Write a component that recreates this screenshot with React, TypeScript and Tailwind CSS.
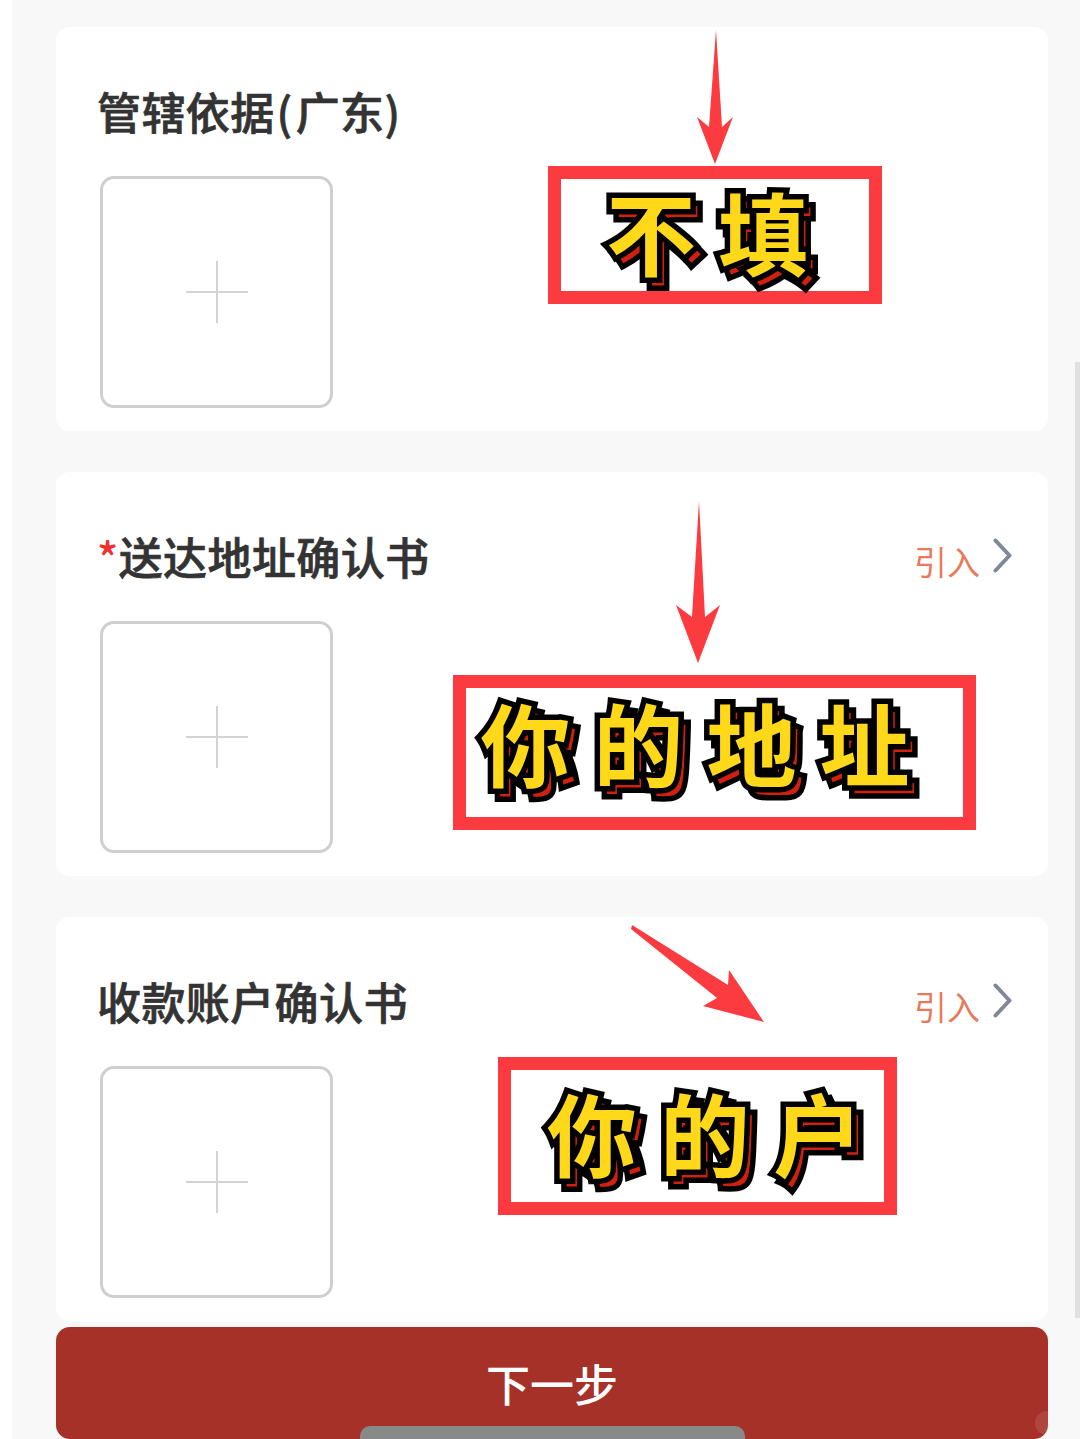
import type { ReactNode } from "react";

const FONT = "font-['Noto_Sans_CJK_SC','Noto_Sans',sans-serif]";

function Chevron() {
  return (
    <svg width="19" height="36" viewBox="0 0 19 36" fill="none" className="mb-[4px] ml-[13px]">
      <path d="M2.5 2.5 L16.5 17.5 L2.5 32.5" stroke="#7f8799" strokeWidth="4" strokeLinecap="round" strokeLinejoin="round" />
    </svg>
  );
}

function Plus() {
  return (
    <svg width="62" height="62" viewBox="0 0 62 62" fill="none">
      <path d="M31 0 V62 M0 31 H62" stroke="#d3d3d3" strokeWidth="2" />
    </svg>
  );
}

function Card({ title, link, className }: { title: ReactNode; link?: boolean; className?: string }) {
  return (
    <section className={`h-[404px] w-[992px] rounded-[14px] bg-white pt-[55px] ${className ?? ""}`}>
      <div className="flex h-[62px] items-center justify-between pl-[41px] pr-[36px]">
        <h2 className="pb-[4px] text-[44px] leading-none font-medium tracking-[0.4px] text-[#333333] [-webkit-text-stroke:0.7px_#333333]">
          {title}
        </h2>
        {link && (
          <div className="flex items-center">
            <span className="mt-[6px] text-[33px] leading-none font-normal text-[#e8795a]">引入</span>
            <Chevron />
          </div>
        )}
      </div>
      <div className="mt-[32px] ml-[44px] flex h-[232px] w-[233px] items-center justify-center rounded-[14px] border-[3px] border-[#cfcfcf] bg-white">
        <Plus />
      </div>
    </section>
  );
}

function Sticker({ text, className, inner }: { text: string; className: string; inner: string }) {
  return (
    <div className={`absolute flex items-center justify-center border-[13px] border-[#fb3b40] bg-white ${className}`}>
      <span
        data-text={text}
        className={`relative isolate text-[90px] whitespace-nowrap leading-none font-bold text-[#ffd819] [-webkit-text-stroke:11px_#000] [paint-order:stroke_fill] before:absolute before:top-[8px] before:left-[7px] before:-z-10 before:text-[#d2200f] before:content-[attr(data-text)] ${inner}`}
      >
        {text}
      </span>
    </div>
  );
}

export default function App() {
  return (
    <div className={`relative h-[1439px] w-[1080px] overflow-hidden bg-white pl-[12px] ${FONT}`}>
      <main className="h-full bg-[#f8f8f8] pt-[27px] pl-[44px]">
        <Card
          title={
            <>
              管辖依据<span className="mr-[3px] ml-[2px]">(</span>广东)
            </>
          }
        />
        <Card
          className="mt-[41px]"
          link
          title={
            <>
              <span className="text-[#f0302c] [-webkit-text-stroke:0]">*</span>送达地址确认书
            </>
          }
        />
        <Card className="mt-[41px]" link title="收款账户确认书" />
        <button className="mt-[6px] flex h-[112px] w-[992px] items-center justify-center rounded-[14px] bg-[#a63129] text-[44px] leading-none font-medium text-white">
          下一步
        </button>
      </main>

      {/* scrollbar */}
      <div className="absolute top-[362px] right-0 h-[956px] w-[5px] bg-[#e0e0e0]" />

      {/* annotations */}
      <svg width="1080" height="1439" viewBox="0 0 1080 1439" className="pointer-events-none absolute top-0 left-0">
        <path d="M716 30 L722 127 L733 117 L715 164 L697 117 L709 127 Z" fill="#fb3b40" />
        <path d="M699 501 L705 617 L720 605 L698 663 L676 605 L692 617 Z" fill="#fb3b40" />
        <path d="M632 925 L728 985 L729 970 L764 1022 L703 1006 L717 998 L631 929 Z" fill="#fb3b40" />
      </svg>
      <Sticker text="不填" className="top-[166px] left-[548px] h-[138px] w-[334px]" inner="-mt-[10px] ml-[6px] tracking-[22px]" />
      <Sticker text="你的地址" className="top-[675px] left-[453px] h-[155px] w-[523px]" inner="-mt-[24px] -ml-[16px] tracking-[23px]" />
      <Sticker text="你的户" className="top-[1057px] left-[498px] h-[158px] w-[399px]" inner="-mt-[10px] ml-[38px] tracking-[23px]" />

      {/* home indicator + watermark */}
      <div className="absolute top-[1426px] left-[360px] h-[13px] w-[385px] rounded-t-[10px] bg-[#888a88]" />
      <div className="absolute top-[1411px] left-[1035px] h-[24px] w-[14px] rounded-l-full bg-white/10" />
    </div>
  );
}
